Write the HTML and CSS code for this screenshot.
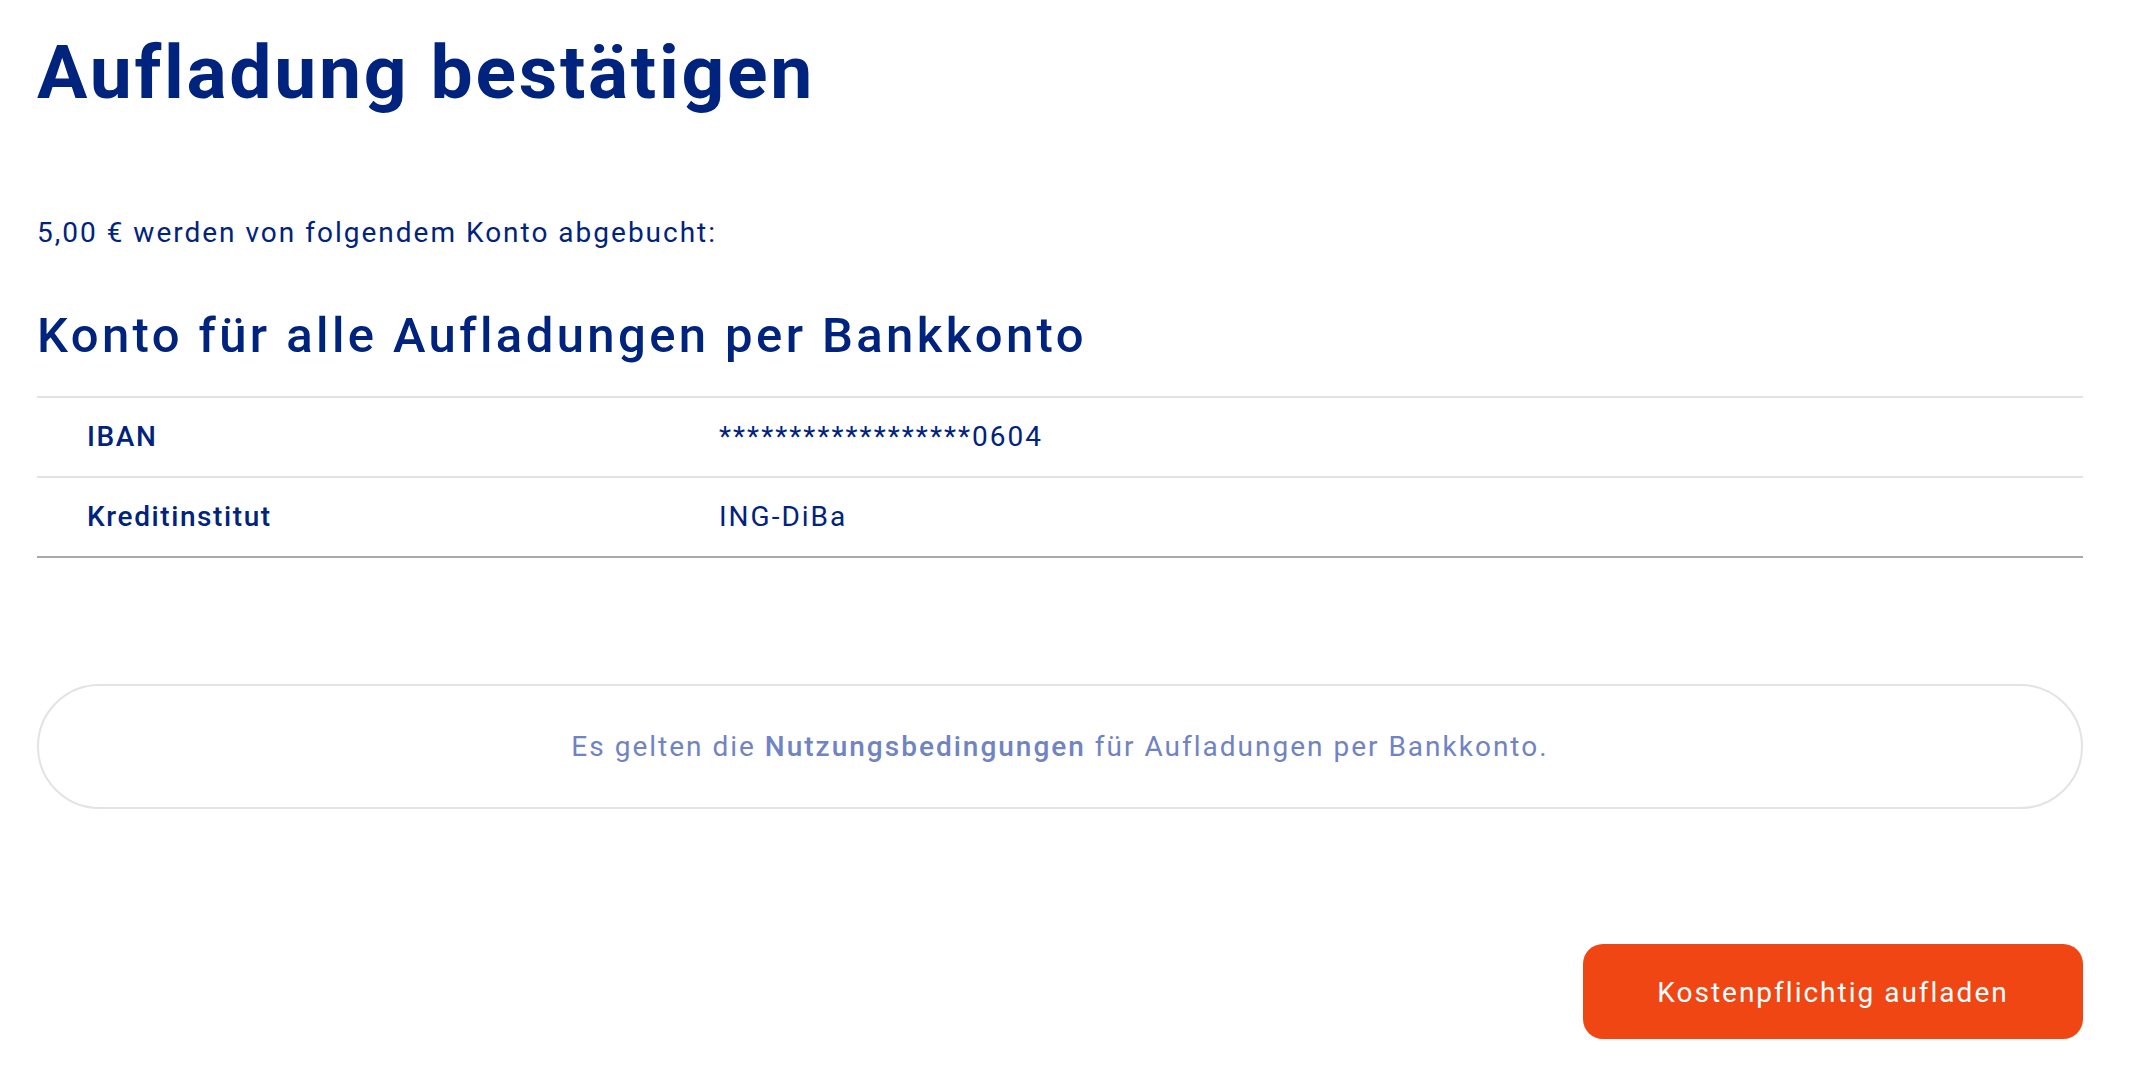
FILE: index.html
```html
<!DOCTYPE html>
<html lang="de">
<head>
<meta charset="utf-8">
<title>Aufladung bestätigen</title>
<link rel="stylesheet" href="styles.css">
</head>
<body>
<main class="page">
  <h1 class="title">Aufladung bestätigen</h1>
  <p class="intro">5,00 € werden von folgendem Konto abgebucht:</p>
  <h2 class="subtitle">Konto für alle Aufladungen per Bankkonto</h2>
  <div class="table">
    <div class="row">
      <div class="label">IBAN</div>
      <div class="value">******************0604</div>
    </div>
    <div class="row row-last">
      <div class="label">Kreditinstitut</div>
      <div class="value">ING-DiBa</div>
    </div>
  </div>
  <div class="terms">
    <p class="terms-text">Es gelten die <a class="terms-link" href="#">Nutzungsbedingungen</a> für Aufladungen per Bankkonto.</p>
  </div>
  <div class="actions">
    <button class="btn" type="button">Kostenpflichtig aufladen</button>
  </div>
</main>
</body>
</html>
```
FILE: styles.css
```css
* { box-sizing: border-box; }
html, body { margin: 0; padding: 0; background: #ffffff; }
body {
  font-family: Roboto, "Liberation Sans", Arial, sans-serif;
  color: #00237d;
  font-variant-ligatures: none;
}
.page {
  padding: 28px 59px 0 37px;
  display: flex;
  flex-direction: column;
}
.title {
  margin: 0;
  font-size: 75px;
  line-height: 88px;
  font-weight: 700;
  letter-spacing: 2.7px;
  color: #00237d;
}
.intro {
  margin: 101px 0 0 0;
  font-size: 28px;
  line-height: 32px;
  letter-spacing: 2px;
}
.subtitle {
  margin: 58px 0 0 0;
  font-size: 49px;
  line-height: 58px;
  font-weight: 500;
  letter-spacing: 3.4px;
}
.table {
  margin-top: 31px;
  border-top: 2px solid #e2e2e2;
}
.row {
  display: grid;
  grid-template-columns: 632px 1fr;
  align-items: center;
  height: 80px;
  padding-left: 50px;
  border-bottom: 2px solid #e2e2e2;
  font-size: 28px;
  line-height: 32px;
  letter-spacing: 2px;
}
.row-last { border-bottom-color: #a9a9a9; }
.label { font-weight: 500; letter-spacing: 1.6px; }
.value { font-weight: 400; }
.terms {
  margin-top: 126px;
  height: 125px;
  border: 2px solid #e3e3e3;
  border-radius: 63px;
  display: flex;
  align-items: center;
  justify-content: center;
}
.terms-text {
  margin: 0;
  font-size: 28px;
  line-height: 32px;
  letter-spacing: 2px;
  color: #7083c4;
}
.terms-link {
  color: #7083c4;
  font-weight: 500;
  text-decoration: none;
}
.actions {
  margin-top: 135px;
  display: flex;
  justify-content: flex-end;
}
.btn {
  width: 500px;
  height: 95px;
  border: 0;
  border-radius: 20px;
  background: #f04614;
  color: #ffffff;
  font-family: Roboto, "Liberation Sans", Arial, sans-serif;
  font-size: 28px;
  line-height: 32px;
  letter-spacing: 2px;
  font-weight: 400;
  padding: 2px 0 0 0;
  cursor: pointer;
}
```
